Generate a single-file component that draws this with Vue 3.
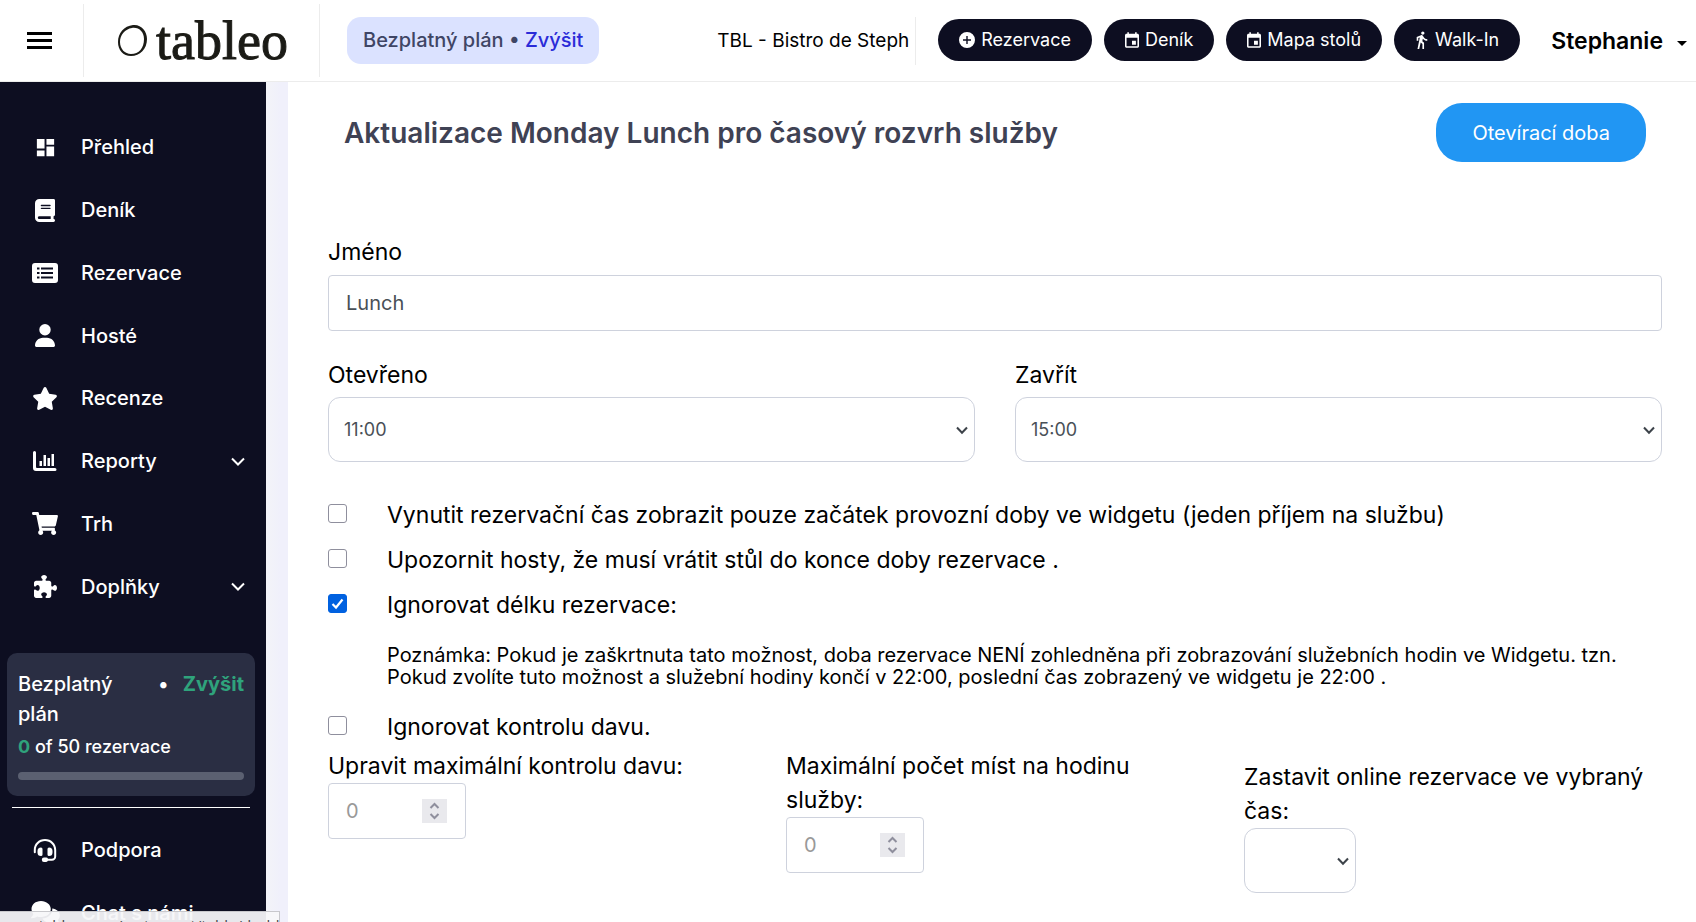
<script setup>
import { ref } from 'vue'

const nav = [
  { label: 'Přehled', icon: 'dashboard' },
  { label: 'Deník', icon: 'book' },
  { label: 'Rezervace', icon: 'list' },
  { label: 'Hosté', icon: 'user' },
  { label: 'Recenze', icon: 'star' },
  { label: 'Reporty', icon: 'chart', sub: true },
  { label: 'Trh', icon: 'cart' },
  { label: 'Doplňky', icon: 'puzzle', sub: true }
]
const support = [
  { label: 'Podpora', icon: 'headset' },
  { label: 'Chat s námi', icon: 'chat' }
]
const icons = {
  dashboard: { box: '0 0 24 24', w: 23, h: 23, d: 'M3 13h8V3H3v10zm0 8h8v-6H3v6zm10 0h8V11h-8v10zm0-18v6h8V3h-8z' },
  book: { box: '0 0 448 512', w: 20, h: 23, d: 'M96 0C43 0 0 43 0 96V416c0 53 43 96 96 96H384h32c17.7 0 32-14.3 32-32s-14.3-32-32-32V384c17.7 0 32-14.3 32-32V32c0-17.7-14.3-32-32-32H384 96zm0 384H352v64H96c-17.7 0-32-14.3-32-32s14.3-32 32-32zm32-240c0-8.8 7.2-16 16-16H336c8.8 0 16 7.2 16 16s-7.2 16-16 16H144c-8.8 0-16-7.2-16-16zm16 48H336c8.8 0 16 7.2 16 16s-7.2 16-16 16H144c-8.8 0-16-7.2-16-16s7.2-16 16-16z' },
  list: { box: '0 0 26 20', w: 26, h: 20, d: 'M3 0H23a3 3 0 0 1 3 3V17a3 3 0 0 1-3 3H3a3 3 0 0 1-3-3V3a3 3 0 0 1 3-3ZM5 4.500v2h2.500v-2ZM5 9v2h2.500V9ZM5 13.500v2h2.500v-2ZM9 4.500v2H21v-2ZM9 9v2H21V9ZM9 13.500v2H21v-2Z' },
  user: { box: '0 0 448 512', w: 20, h: 23, d: 'M224 256A128 128 0 1 0 224 0a128 128 0 1 0 0 256zm-45.7 48C79.8 304 0 383.8 0 482.3C0 498.7 13.3 512 29.7 512H418.3c16.4 0 29.7-13.3 29.7-29.7C448 383.8 368.2 304 269.7 304H178.3z' },
  star: { box: '0 0 576 512', w: 26, h: 23, d: 'M316.9 18C311.6 7 300.4 0 288.1 0s-23.4 7-28.8 18L195 150.3 51.4 171.5c-12 1.8-22 10.2-25.7 21.7s-.7 24.2 7.9 32.7L137.8 329 113.2 474.7c-2 12 3 24.2 12.9 31.3s23 8 33.8 2.3l128.3-68.5 128.3 68.5c10.8 5.7 23.9 4.9 33.8-2.3s14.9-19.3 12.9-31.3L438.5 329 542.7 225.9c8.6-8.5 11.7-21.2 7.9-32.7s-13.7-19.9-25.7-21.7L381.2 150.3 316.9 18z' },
  chart: { box: '0 0 24 20', w: 24, h: 20, d: 'M1.500 0A1.500 1.500 0 0 1 3 1.500V16a1 1 0 0 0 1 1H22a1.500 1.500 0 0 1 0 3H3a3 3 0 0 1-3-3V1.500A1.500 1.500 0 0 1 1.500 0ZM6.500 10h2.500v5H6.500ZM10.500 4h2.500v11h-2.500ZM14.500 7h2.500v8h-2.500ZM18.500 3H21v12h-2.500Z' },
  cart: { box: '0 0 576 512', w: 26, h: 23, d: 'M528.12 301.319l47.273-208C578.806 78.301 567.391 64 551.99 64H159.208l-9.166-44.81C147.758 8.021 137.93 0 126.529 0H24C10.745 0 0 10.745 0 24v16c0 13.255 10.745 24 24 24h69.883l70.248 343.435C147.325 417.1 136 435.222 136 456c0 30.928 25.072 56 56 56s56-25.072 56-56c0-15.674-6.447-29.835-16.824-40h209.647C430.447 426.165 424 440.326 424 456c0 30.928 25.072 56 56 56s56-25.072 56-56c0-22.172-12.888-41.332-31.579-50.405l5.517-24.276c3.413-15.018-8.002-29.319-23.403-29.319H218.117l-6.545-32h293.145c11.206 0 20.92-7.754 23.403-18.681z' },
  puzzle: { box: '0 0 512 512', w: 23, h: 23, d: 'M192 104.8c0-9.2-5.8-17.3-13.2-22.8C167.2 73.3 160 61.3 160 48c0-26.5 28.7-48 64-48s64 21.5 64 48c0 13.3-7.2 25.3-18.8 34c-7.4 5.5-13.2 13.6-13.2 22.8c0 12.8 10.4 23.2 23.2 23.2H336c26.5 0 48 21.5 48 48v56.8c0 12.8 10.4 23.2 23.2 23.2c9.2 0 17.3-5.8 22.8-13.2c8.7-11.6 20.7-18.8 34-18.8c26.5 0 48 28.7 48 64s-21.5 64-48 64c-13.3 0-25.3-7.2-34-18.8c-5.5-7.4-13.6-13.2-22.8-13.2c-12.8 0-23.2 10.4-23.2 23.2V464c0 26.5-21.5 48-48 48H279.2c-12.8 0-23.2-10.4-23.2-23.2c0-9.2 5.8-17.3 13.2-22.8c11.6-8.7 18.8-20.7 18.8-34c0-26.500-28.7-48-64-48s-64 21.500-64 48c0 13.3 7.2 25.3 18.8 34c7.4 5.5 13.2 13.6 13.2 22.8c0 12.8-10.4 23.2-23.2 23.2H48c-26.5 0-48-21.5-48-48V343.2C0 330.4 10.4 320 23.2 320c9.2 0 17.3 5.8 22.8 13.2C54.7 344.8 66.7 352 80 352c26.5 0 48-28.7 48-64s-21.5-64-48-64c-13.3 0-25.3 7.2-34 18.8C40.5 250.2 32.4 256 23.2 256C10.4 256 0 245.6 0 232.8V176c0-26.5 21.5-48 48-48H168.8c12.8 0 23.2-10.4 23.2-23.2z' },
  headset: { box: '0 0 24 24', w: 24, h: 24, d: 'M12 1C5.600 1 .8 5.900 .8 12v2.200a1 1 0 0 0 2 0V12C2.800 7 6.900 3 12 3s9.200 4 9.200 9v6.500c0 1.300-1 2.300-2.300 2.300H15a2 2 0 0 0-1.800-1.300h-2.200a2.200 2.200 0 0 0 0 4.400h2.200a2 2 0 0 0 1.800-1.100h3.900c2.400 0 4.300-1.900 4.300-4.300V12C23.200 5.900 18.400 1 12 1ZM8 9.500A3.500 3.500 0 0 0 4.500 13v1.500A3.500 3.500 0 0 0 8 18a1.500 1.500 0 0 0 1.500-1.500v-5.500A1.500 1.500 0 0 0 8 9.500ZM16 9.500A3.500 3.500 0 0 1 19.500 13v1.500A3.500 3.500 0 0 1 16 18a1.500 1.500 0 0 1-1.500-1.500v-5.500A1.500 1.500 0 0 1 16 9.500Z' },
  chat: { box: '0 0 29 24', w: 29, h: 24, d: 'M10 0C4.500 0 .5 3.600 .5 8c0 1.900.7 3.500 1.900 4.900C2 14.300 1 15.500 .3 16.200c-.4.500-.1 1 .5 1 2 0 4-.8 5.300-1.700 1.200.4 2.500.6 3.900.6 5.500 0 9.800-3.600 9.800-8S15.500 0 10 0ZM21.200 7.500c.7 5.500-4.200 9.900-9.700 10.100 1.500 2.600 4.700 4.400 8.400 4.400 1.300 0 2.600-.2 3.700-.6 1.300.9 3 1.600 4.800 1.600.5 0 .8-.5.400-.9-.6-.6-1.500-1.700-1.900-3 1.200-1.300 1.900-2.900 1.900-4.600 0-3.600-3.300-6.700-7.600-7Z' },
  plus: { box: '0 0 16 16', w: 16, h: 16, d: 'M8 0a8 8 0 1 0 0 16A8 8 0 0 0 8 0ZM7.300 4h1.400v3.300H12v1.400H8.700V12H7.300V8.700H4V7.300h3.300Z' },
  event: { box: '3 1 18 20', w: 14, h: 16, d: 'M17 12h-5v5h5v-5zM16 1v2H8V1H6v2H5c-1.11 0-1.99.9-1.99 2L3 19c0 1.1.89 2 2 2h14c1.1 0 2-.9 2-2V5c0-1.1-.9-2-2-2h-1V1h-2zm3 18H5V8h14v11z' },
  walk: { box: '4 1 17 22', w: 14, h: 18, d: 'M13.5 5.5c1.1 0 2-.9 2-2s-.9-2-2-2-2 .9-2 2 .9 2 2 2zM9.8 8.9L7 23h2.100l1.800-8 2.100 2v6h2v-7.500l-2.100-2 .6-3C14.800 12 16.800 13 19 13v-2c-1.900 0-3.500-1-4.300-2.400l-1-1.600c-.4-.6-1-1-1.700-1-.3 0-.5.1-.8.1L6 8.300V13h2V9.600l1.800-.7' }
}
const actions = [
  { label: 'Rezervace', icon: 'plus' },
  { label: 'Deník', icon: 'event' },
  { label: 'Mapa stolů', icon: 'event' },
  { label: 'Walk-In', icon: 'walk' }
]

const name = ref('Lunch')
const open = ref('11:00')
const close = ref('15:00')
const stop = ref('')
const force = ref(false)
const warn = ref(false)
const ignoreLength = ref(true)
const ignoreCrowd = ref(false)
const used = 0
const limit = 50
</script>

<template>
  <div class="app">
    <header class="topbar">
      <button class="burger" type="button" aria-label="Menu"><i></i><i></i><i></i></button>
      <a class="logo" href="#">
        <svg width="31" height="33" viewBox="0 0 31 33" aria-hidden="true">
          <path fill="#1b1b16" fill-rule="evenodd" d="M16 1C24 0 30 7 30 15C30 25 23 32 14 32C6 32 1 26 1 18C1 9 7 2 16 1ZM15 4C8 5 3 11 3 18C3 25 8 30 14 30C22 30 27 24 27 15C27 8 22 3 15 4Z" />
        </svg>
        <span>tableo</span>
      </a>
      <p class="plan-pill">Bezplatný plán • <a href="#">Zvýšit</a></p>
      <div class="venue">TBL - Bistro de Steph</div>
      <nav class="actions">
        <button v-for="a in actions" :key="a.label" type="button">
          <svg :width="icons[a.icon].w" :height="icons[a.icon].h" :viewBox="icons[a.icon].box" aria-hidden="true"><path fill="currentColor" fill-rule="evenodd" :d="icons[a.icon].d" /></svg>
          {{ a.label }}
        </button>
      </nav>
      <button class="account" type="button">Stephanie<span class="caret"></span></button>
    </header>

    <div class="body">
      <aside class="sidebar">
        <nav class="menu main-menu">
          <a v-for="n in nav" :key="n.label" href="#">
            <span class="ico"><svg :width="icons[n.icon].w" :height="icons[n.icon].h" :viewBox="icons[n.icon].box" aria-hidden="true"><path fill="currentColor" fill-rule="evenodd" :d="icons[n.icon].d" /></svg></span>
            <span class="lbl">{{ n.label }}</span>
            <svg v-if="n.sub" width="14" height="9" viewBox="0 0 14 9" fill="none" stroke="currentColor" stroke-width="2" aria-hidden="true"><path d="M1 1.500 7 7.500 13 1.500" /></svg>
          </a>
        </nav>
        <section class="quota">
          <div class="quota-top"><span class="quota-name">Bezplatný plán</span><span>•</span><a href="#">Zvýšit</a></div>
          <p><b>{{ used }}</b> of {{ limit }} rezervace</p>
          <div class="bar"><div :style="{ width: (used / limit) * 100 + '%' }"></div></div>
        </section>
        <hr />
        <nav class="menu">
          <a v-for="n in support" :key="n.label" href="#">
            <span class="ico"><svg :width="icons[n.icon].w" :height="icons[n.icon].h" :viewBox="icons[n.icon].box" aria-hidden="true"><path fill="currentColor" :d="icons[n.icon].d" /></svg></span>
            <span class="lbl">{{ n.label }}</span>
          </a>
        </nav>
      </aside>

      <main class="page">
        <div class="head">
          <h1>Aktualizace Monday Lunch pro časový rozvrh služby</h1>
          <button type="button">Otevírací doba</button>
        </div>

        <form @submit.prevent>
          <div class="field name">
            <label for="name">Jméno</label>
            <input id="name" v-model="name" class="box" type="text" />
          </div>

          <div class="row two">
            <div class="field">
              <label for="open">Otevřeno</label>
              <div class="select">
                <select id="open" v-model="open"><option>11:00</option></select>
                <svg width="12" height="9" viewBox="0 0 12 9" aria-hidden="true"><path d="M1 1.500 6 6.800 11 1.500" /></svg>
              </div>
            </div>
            <div class="field">
              <label for="close">Zavřít</label>
              <div class="select">
                <select id="close" v-model="close"><option>15:00</option></select>
                <svg width="12" height="9" viewBox="0 0 12 9" aria-hidden="true"><path d="M1 1.500 6 6.800 11 1.500" /></svg>
              </div>
            </div>
          </div>

          <div class="checks">
            <label><input v-model="force" type="checkbox" /><span>Vynutit rezervační čas zobrazit pouze začátek provozní doby ve widgetu (jeden příjem na službu)</span></label>
            <label><input v-model="warn" type="checkbox" /><span>Upozornit hosty, že musí vrátit stůl do konce doby rezervace .</span></label>
            <label><input v-model="ignoreLength" type="checkbox" /><span>Ignorovat délku rezervace:</span></label>
            <p class="note">Poznámka: Pokud je zaškrtnuta tato možnost, doba rezervace NENÍ zohledněna při zobrazování služebních hodin ve Widgetu. tzn. Pokud zvolíte tuto možnost a služební hodiny končí v 22:00, poslední čas zobrazený ve widgetu je 22:00 .</p>
            <label><input v-model="ignoreCrowd" type="checkbox" /><span>Ignorovat kontrolu davu.</span></label>
          </div>

          <div class="row three">
            <div class="field">
              <label for="crowd">Upravit maximální kontrolu davu:</label>
              <div class="number">
                <input id="crowd" class="box" type="number" placeholder="0" />
                <svg width="25" height="24" viewBox="0 0 25 24" aria-hidden="true"><path d="M8.500 9 12.500 5 16.500 9M8.500 15 12.500 19 16.500 15" /></svg>
              </div>
            </div>
            <div class="field">
              <label for="seats">Maximální počet míst na hodinu služby:</label>
              <div class="number">
                <input id="seats" class="box" type="number" placeholder="0" />
                <svg width="25" height="24" viewBox="0 0 25 24" aria-hidden="true"><path d="M8.500 9 12.500 5 16.500 9M8.500 15 12.500 19 16.500 15" /></svg>
              </div>
            </div>
            <div class="field last">
              <label for="stop">Zastavit online rezervace ve vybraný čas:</label>
              <div class="select small">
                <select id="stop" v-model="stop"><option value=""></option></select>
                <svg width="12" height="9" viewBox="0 0 12 9" aria-hidden="true"><path d="M1 1.500 6 6.800 11 1.500" /></svg>
              </div>
            </div>
          </div>
        </form>
      </main>
    </div>

    <div class="status">app.tableo.com/restaurant/table/dashboard</div>
  </div>
</template>

<style>
html, body { margin: 0; background: #fff; }
</style>

<style scoped>
* { box-sizing: border-box; }
.app {
  height: 100vh;
  display: flex;
  flex-direction: column;
  overflow: hidden;
  position: relative;
  font-family: Inter, "Open Sans", sans-serif;
  font-size: 20px;
  color: #000;
}
a { color: inherit; text-decoration: none; }
button, input, select { font: inherit; margin: 0; }
button { border: 0; background: none; cursor: pointer; }
p { margin: 0; }

.topbar {
  flex: none;
  height: 82px;
  display: flex;
  align-items: center;
  border-bottom: 1px solid #ececec;
}
.burger {
  width: 84px;
  height: 73px;
  padding: 0 0 0 27px;
  display: flex;
  flex-direction: column;
  justify-content: center;
  gap: 4px;
  border-right: 1px solid #ececec;
}
.burger i { width: 25px; height: 3px; background: #000; }
.logo {
  width: 236px;
  height: 73px;
  padding-left: 33px;
  display: flex;
  align-items: center;
  gap: 8px;
  border-right: 1px solid #ececec;
  color: #1b1b16;
}
.logo span { font: 54px/60px "Liberation Serif", serif; -webkit-text-stroke: 1px #1b1b16; }
.plan-pill {
  height: 47px;
  margin-left: 27px;
  padding: 0 16px;
  border-radius: 14px;
  background: #dbe2ff;
  color: #3f4565;
  font-weight: 500;
  line-height: 47px;
  white-space: nowrap;
}
.plan-pill a { color: #2a2bd8; }
.venue {
  margin-left: auto;
  height: 48px;
  line-height: 48px;
  padding-right: 6px;
  border-right: 1px solid #ececec;
  font-size: 19px;
  white-space: nowrap;
}
.actions { display: flex; gap: 12px; margin: 0 0 2px 22px; }
.actions button {
  height: 42px;
  padding: 0 21px;
  display: flex;
  align-items: center;
  gap: 6px;
  border-radius: 21px;
  background: #0d0e21;
  color: #fff;
  font-size: 18px;
  white-space: nowrap;
}
.account {
  padding: 0;
  margin: 0 9px 0 31px;
  display: flex;
  align-items: center;
  gap: 14px;
  font-size: 23px;
  font-weight: 600;
  color: #000;
}
.caret { border: 5px solid transparent; border-top-color: #000; border-bottom: 0; margin-top: 5px; }

.body { flex: 1; min-height: 0; display: flex; background: linear-gradient(90deg, #f3f4f8 266px, #f0f0fb 280px); }
.sidebar { flex: none; width: 266px; background: #0d0e21; color: #fff; padding-top: 34px; overflow: hidden; font-weight: 500; }
.menu a { height: 63px; display: flex; align-items: center; padding: 0 21px 0 30px; }
.main-menu { height: 502px; display: flex; flex-direction: column; }
.main-menu a { flex: 1; }
.ico { width: 30px; display: flex; justify-content: center; }
.lbl { margin-left: 21px; flex: 1; white-space: nowrap; }
.quota {
  margin: 35px 11px 0 7px;
  padding: 16px 11px;
  border-radius: 10px;
  background: #2a2e43;
}
.quota-top { display: flex; gap: 14px; line-height: 30px; }
.quota-name { flex: 1; }
.quota-top a { color: #2fa37c; font-weight: 700; }
.quota p { font-size: 18px; line-height: 30px; margin-top: 3px; }
.quota b { color: #2fa37c; }
.bar { height: 8px; border-radius: 4px; background: #5b6071; margin-top: 10px; overflow: hidden; }
.bar div { height: 8px; background: #2fa37c; }
.sidebar hr { border: 0; height: 1px; background: #fff; margin: 11px 16px 10px 12px; }

.page { flex: 1; min-width: 0; margin-left: 22px; background: #fff; padding: 21px 34px 0 40px; overflow: hidden; }
.head { display: flex; align-items: center; justify-content: space-between; padding: 0 16px; }
h1 { margin: 0; font-size: 28px; font-weight: 600; color: #3f4254; }
.head button {
  height: 59px;
  padding: 0 36px;
  border-radius: 26px;
  background: #2196f3;
  color: #fff;
}
form { padding-top: 73px; font-size: 23px; }
.field { display: flex; flex-direction: column; align-items: flex-start; min-width: 0; }
.field label { line-height: 34px; }
.box {
  width: 100%;
  height: 56px;
  border: 1px solid #ced2dd;
  border-radius: 4px;
  background: #fff;
  padding: 0 17px;
  font-size: 20px;
  color: #495057;
}
.name .box { margin-top: 6px; }
.row { display: grid; gap: 40px; }
.two { grid-template-columns: 1fr 1fr; margin-top: 27px; }
.two .select { margin-top: 5px; }
.select { position: relative; width: 100%; }
.select select {
  appearance: none;
  display: block;
  width: 100%;
  height: 65px;
  border: 1px solid #ced2dd;
  border-radius: 12px;
  background: #fff;
  padding: 0 15px;
  font-size: 18px;
  color: #495057;
}
.select svg { position: absolute; right: 7px; top: 29px; fill: none; stroke: #3d434a; stroke-width: 2; pointer-events: none; }
.small { width: 112px; }
.checks { margin-top: 30px; display: flex; flex-direction: column; }
.checks label { display: flex; align-items: center; height: 45px; white-space: nowrap; }
.checks span { margin-left: 40px; }
.checks input {
  appearance: none;
  flex: none;
  width: 19px;
  height: 19px;
  margin-bottom: 3px;
  border: 1px solid #8f8f9d;
  border-radius: 3px;
  background: #fff;
}
.checks input:checked {
  border-color: #0061e0;
  background: #0061e0 url("data:image/svg+xml,%3Csvg xmlns='http://www.w3.org/2000/svg' viewBox='0 0 17 17'%3E%3Cpath d='M3.500 9 7 12.500 13.500 4.500' fill='none' stroke='white' stroke-width='2.200'/%3E%3C/svg%3E");
}
.note { margin: 17px 34px 16px 59px; font-size: 20px; line-height: 22px; }
.three { grid-template-columns: repeat(3, 1fr); }
.last { margin-top: 11px; }
.number { position: relative; width: 138px; }
.number .box { display: block; appearance: textfield; }
.number .box::placeholder { color: #999; opacity: 1; }
.number svg { position: absolute; right: 19px; top: 16px; background: #e9e9ed; fill: none; stroke: #8f8f9d; stroke-width: 2; pointer-events: none; }

.status {
  position: absolute;
  left: 0;
  bottom: 0;
  width: 280px;
  height: 11px;
  overflow: hidden;
  padding: 3px 8px 0;
  border-top: 1px solid #c8c8cc;
  border-right: 1px solid #c8c8cc;
  background: rgba(247, 247, 249, 0.94);
  font: 15px/20px "Open Sans", sans-serif;
  color: #444;
  white-space: nowrap;
}
</style>
